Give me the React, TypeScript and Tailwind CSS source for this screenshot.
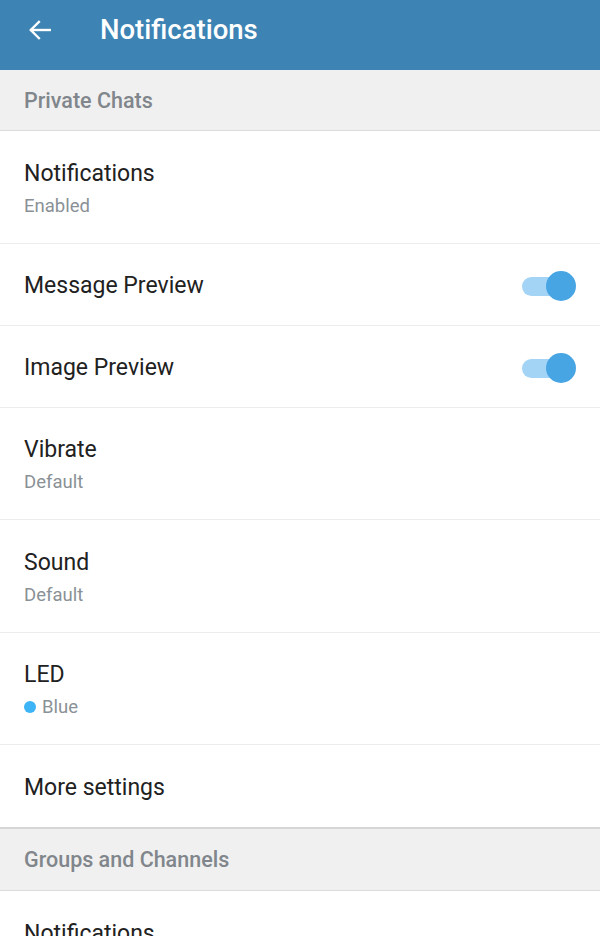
import React from 'react';

type Row = {
  title: string;
  subtitle?: string;
  dot?: boolean;
  toggle?: boolean;
};

const privateRows: Row[] = [
  { title: 'Notifications', subtitle: 'Enabled' },
  { title: 'Message Preview', toggle: true },
  { title: 'Image Preview', toggle: true },
  { title: 'Vibrate', subtitle: 'Default' },
  { title: 'Sound', subtitle: 'Default' },
  { title: 'LED', subtitle: 'Blue', dot: true },
  { title: 'More settings' },
];

const Toggle = () => (
  <div className="relative w-[54px] h-[30px] flex items-center">
    <div className="w-[44px] h-[19px] rounded-full bg-[#a3d3f5]" />
    <div className="absolute right-0 top-0 w-[30px] h-[30px] rounded-full bg-[#48a5e4]" />
  </div>
);

const SectionHeader = ({ label, tall }: { label: string; tall?: boolean }) => (
  <div className={`${tall ? 'h-[62px]' : 'h-[61px]'} bg-[#f0f0f0] border-b border-[#dcdcdc] flex items-center px-6 pt-[2px]`}>
    <span className="text-[21.5px] font-medium text-[#80868b]">{label}</span>
  </div>
);

const SettingRow = ({ row, last }: { row: Row; last?: boolean }) => (
  <div
    className={`flex items-center justify-between px-6 bg-white pt-[4px] ${row.subtitle ? 'h-[112.5px]' : 'h-[82px]'} ${last ? '' : 'border-b border-[#ececec]'}`}
  >
    <div className="flex flex-col">
      <span className="text-[23px] text-[#212121] leading-[28px]">{row.title}</span>
      {row.subtitle && (
        <span className="flex items-center gap-[6px] text-[18.5px] text-[#8a9196] leading-[24px] mt-[6px]">
          {row.dot && <span className="w-[12px] h-[12px] rounded-full bg-[#3cb4f5]" />}
          {row.subtitle}
        </span>
      )}
    </div>
    {row.toggle && <Toggle />}
  </div>
);

export default function App() {
  return (
    <div className="w-[600px] h-[936px] overflow-hidden bg-white" style={{ fontFamily: 'Roboto, "Noto Sans", sans-serif' }}>
      <div className="h-[70px] bg-[#3d84b4] flex items-start pt-[12px]">
        <div className="w-[80px] h-[36px] flex items-center justify-center">
          <svg width="26" height="26" viewBox="0 0 24 24" fill="none" stroke="white" strokeWidth="2.2" strokeLinecap="square">
            <path d="M21 12H4" />
            <path d="M11 4.5L3.5 12L11 19.5" />
          </svg>
        </div>
        <span className="ml-[20px] text-[27.5px] leading-[36px] font-medium text-white">Notifications</span>
      </div>
      <SectionHeader label="Private Chats" />
      {privateRows.map((row, i) => (
        <SettingRow key={row.title} row={row} last={i === privateRows.length - 1} />
      ))}
      <div className="border-t-2 border-[#d6d6d6]">
        <SectionHeader label="Groups and Channels" tall />
      </div>
      <SettingRow row={{ title: 'Notifications', subtitle: 'Enabled' }} />
    </div>
  );
}
